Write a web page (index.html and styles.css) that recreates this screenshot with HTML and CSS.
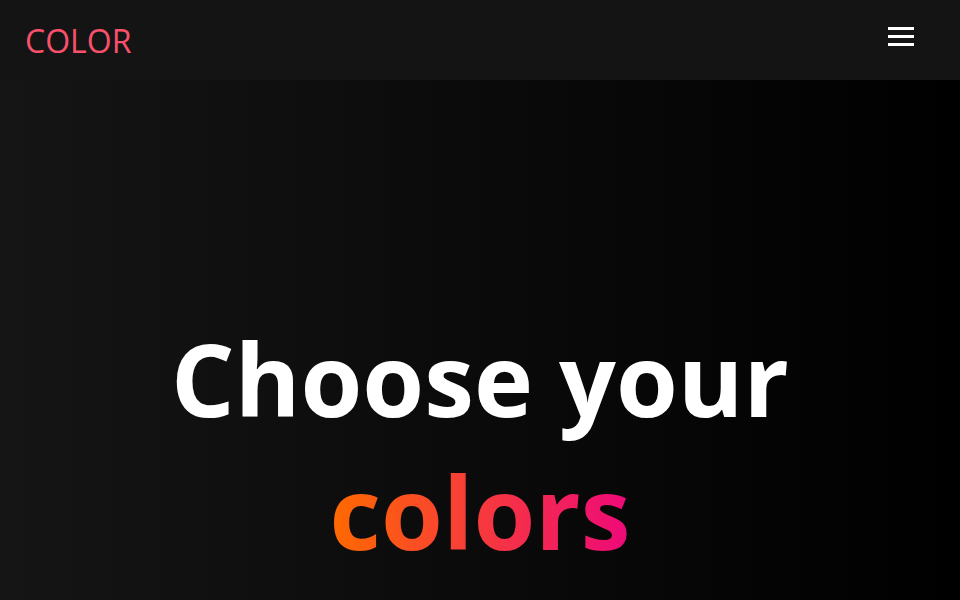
FILE: index.html
```html
<!DOCTYPE html>
<html lang="en">
<head>
<meta charset="utf-8">
<title>Color</title>
<link rel="stylesheet" href="styles.css">
</head>
<body>
<header class="topbar">
  <a class="logo" href="#">COLOR</a>
  <button class="menu" aria-label="Menu">
    <span class="bar"></span><span class="bar"></span><span class="bar"></span>
  </button>
</header>
<main class="hero">
  <h1 class="title">Choose your <span class="grad">colors</span></h1>
</main>
</body>
</html>
```
FILE: styles.css
```css
* { box-sizing: border-box; }
html, body { margin: 0; padding: 0; }
body {
  font-family: "Open Sans", "Liberation Sans", sans-serif;
  background: #000;
  color: #fff;
  min-height: 600px;
  overflow: hidden;
}
.topbar {
  height: 80px;
  background: #141414;
  display: flex;
  align-items: flex-start;
  justify-content: space-between;
  padding: 0 46px 0 25px;
}
.logo {
  color: #f9506b;
  text-decoration: none;
  font-size: 32px;
  line-height: 1;
  margin-top: 25px;
}
.menu {
  background: none;
  border: 0;
  padding: 0;
  margin-top: 27px;
  width: 26px;
  display: flex;
  flex-direction: column;
  gap: 5px;
}
.bar {
  display: block;
  height: 3px;
  width: 26px;
  background: #fff;
}
.hero {
  height: 520px;
  background: linear-gradient(to right, #151515, #000);
  display: flex;
  justify-content: center;
  padding-top: 232px;
}
.title {
  margin: 0;
  text-align: center;
  font-weight: 700;
  font-size: 100px;
  line-height: 133px;
  width: 700px;
}
.grad {
  background: linear-gradient(to right, #ff6a00, #ee0979);
  -webkit-background-clip: text;
  background-clip: text;
  color: transparent;
}
```
